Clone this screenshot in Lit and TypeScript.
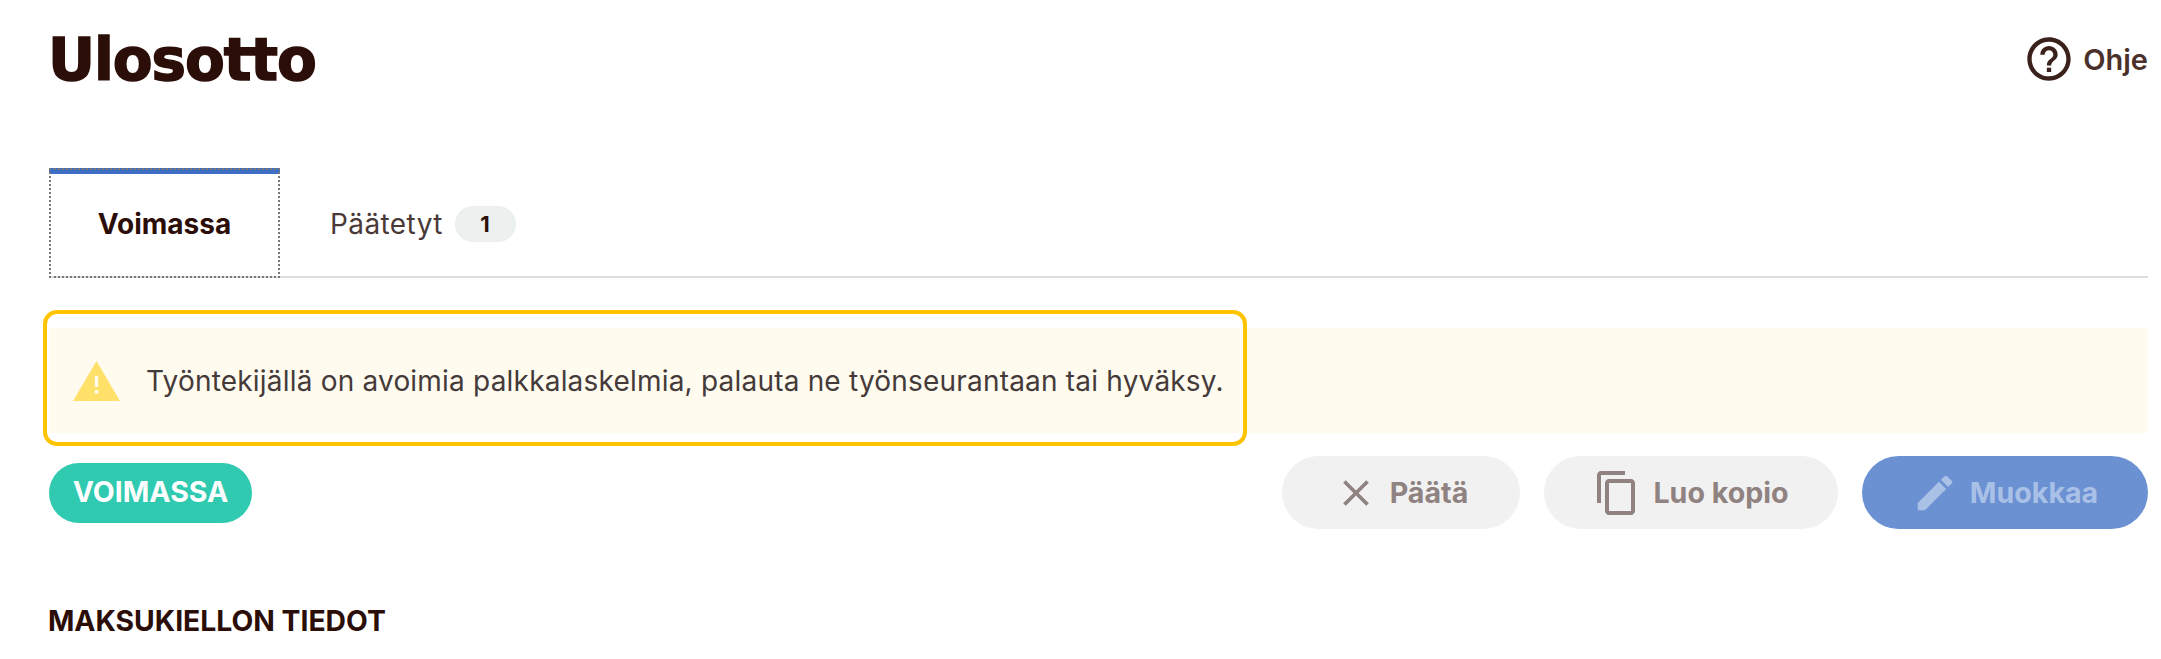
import { LitElement, html, css } from "lit";
import { customElement } from "lit/decorators.js";

@customElement("app-root")
export class AppRoot extends LitElement {
  static styles = css`
    :host {
      display: block;
      font-family: Inter, "Liberation Sans", sans-serif;
      color: #2b0e07;
      background: #fff;
      min-height: 659px;
    }
    .page {
      padding: 0 13px 0 49px;
    }
    .top {
      display: flex;
      justify-content: space-between;
      align-items: center;
      height: 118px;
    }
    h1 {
      margin: 2px 0 0 -1px;
      font-family: "DejaVu Sans", Inter, sans-serif;
      font-size: 58px;
      font-weight: 700;
      line-height: 1;
      letter-spacing: -1.1px;
      -webkit-text-stroke: 1.5px #2b0e07;
    }
    .help {
      display: flex;
      align-items: center;
      gap: 12px;
      font-size: 29px;
      font-weight: 600;
      color: #4a2f2a;
    }
    .help svg {
      width: 52px;
      height: 52px;
      margin-right: -4px;
    }
    .tabs {
      display: flex;
      align-items: stretch;
      height: 110px;
      margin-top: 50px;
      border-bottom: 2px solid #dddddd;
      box-sizing: border-box;
    }
    .tab {
      display: flex;
      align-items: center;
      gap: 12px;
      font-size: 28px;
      letter-spacing: 0.4px;
      color: #4a3a37;
    }
    .tab.active {
      width: 231px;
      justify-content: center;
      box-sizing: border-box;
      border-top: 6px solid #3f6fc4;
      outline: 2px dotted #777;
      outline-offset: -2px;
      margin-bottom: -2px;
      padding-bottom: 4px;
      font-size: 28px;
      letter-spacing: 0;
      font-weight: 700;
      color: #2b0e07;
    }
    .tab.other {
      margin-left: 50px;
      padding-top: 3px;
    }
    .count {
      width: 61px;
      height: 36px;
      display: flex;
      align-items: center;
      justify-content: center;
      border-radius: 18px;
      background: #ecf0ef;
      font-size: 22px;
      font-weight: 700;
      color: #2b0e07;
    }
    .notice {
      display: flex;
      margin-top: 50px;
      background: #fffbef;
      height: 105px;
    }
    .notice-body {
      display: flex;
      align-items: center;
      gap: 26px;
      box-sizing: border-box;
      width: 1196px;
      height: 128px;
      margin: -14px 0 0 -2px;
      padding: 6px 0 0 26px;
      border-radius: 10px;
      outline: 4px solid #ffc400;
      font-size: 28px;
      letter-spacing: 0.2px;
      color: #453a3a;
      white-space: nowrap;
    }
    .notice-body svg {
      width: 47px;
      height: 40px;
      flex: none;
    }
    .bar {
      display: flex;
      align-items: center;
      justify-content: space-between;
      margin-top: 23px;
    }
    .status {
      display: flex;
      align-items: center;
      justify-content: center;
      width: 203px;
      height: 60px;
      border-radius: 30px;
      background: #2fcab0;
      color: #fff;
      font-size: 28.5px;
      font-weight: 700;
      padding-bottom: 2px;
      box-sizing: border-box;
    }
    .actions {
      display: flex;
      gap: 24px;
    }
    .btn {
      display: flex;
      align-items: center;
      justify-content: center;
      gap: 12px;
      height: 73px;
      border-radius: 37px;
      background: #f1f1f1;
      color: #8f8280;
      font-size: 28.6px;
      font-weight: 700;
    }
    .btn svg {
      flex: none;
    }
    .btn.end {
      width: 238px;
    }
    .btn.copy {
      width: 294px;
    }
    .btn.edit {
      width: 286px;
      background: #6c91d2;
      color: #a9c0e7;
    }
    h2 {
      margin: 77px 0 0 -1px;
      font-size: 28.3px;
      font-weight: 700;
      line-height: 30px;
    }
  `;

  render() {
    return html`
      <div class="page">
        <div class="top">
          <h1>Ulosotto</h1>
          <div class="help">
            <svg viewBox="0 0 24 24" fill="#3a211c">
              <path d="M11 18h2v-2h-2v2zm1-16C6.48 2 2 6.48 2 12s4.48 10 10 10 10-4.48 10-10S17.52 2 12 2zm0 18c-4.41 0-8-3.59-8-8s3.59-8 8-8 8 3.59 8 8-3.59 8-8 8zm0-14c-2.21 0-4 1.79-4 4h2c0-1.1.9-2 2-2s2 .9 2 2c0 2-3 1.75-3 5h2c0-2.25 3-2.5 3-5 0-2.21-1.79-4-4-4z" />
            </svg>
            <span>Ohje</span>
          </div>
        </div>

        <div class="tabs">
          <div class="tab active">Voimassa</div>
          <div class="tab other">Päätetyt <span class="count">1</span></div>
        </div>

        <div class="notice">
          <div class="notice-body">
            <svg viewBox="0 0 47 40">
              <path d="M23.5 0 47 40H0z" fill="#ffe16a" />
              <rect x="21.8" y="15" width="3.4" height="11" fill="#fffbef" />
              <rect x="21.8" y="29" width="3.4" height="3.6" fill="#fffbef" />
            </svg>
            <span>Työntekijällä on avoimia palkkalaskelmia, palauta ne työnseurantaan tai hyväksy.</span>
          </div>
        </div>

        <div class="bar">
          <div class="status">VOIMASSA</div>
          <div class="actions">
            <div class="btn end">
              <svg width="44" height="44" viewBox="0 0 24 24" fill="#8f8280">
                <path d="M19 6.41 17.59 5 12 10.59 6.41 5 5 6.41 10.59 12 5 17.59 6.41 19 12 13.41 17.59 19 19 17.59 13.41 12z" />
              </svg>
              Päätä
            </div>
            <div class="btn copy">
              <svg width="48" height="50" viewBox="0 0 24 24" fill="#8f8280">
                <path d="M16 1H4c-1.100 0-2 .9-2 2v14h2V3h12V1zm3 4H8c-1.100 0-2 .9-2 2v14c0 1.100.9 2 2 2h11c1.100 0 2-.9 2-2V7c0-1.100-.9-2-2-2zm0 16H8V7h11v14z" />
              </svg>
              Luo kopio
            </div>
            <div class="btn edit">
              <svg width="46" height="46" viewBox="0 0 24 24" fill="#a9c0e7">
                <path d="M3 17.25V21h3.75L17.81 9.94l-3.75-3.75L3 17.25zM20.710 7.040a1 1 0 0 0 0-1.410l-2.340-2.340a1 1 0 0 0-1.410 0l-1.830 1.830 3.750 3.750 1.830-1.830z" />
              </svg>
              Muokkaa
            </div>
          </div>
        </div>

        <h2>MAKSUKIELLON TIEDOT</h2>
      </div>
    `;
  }
}
